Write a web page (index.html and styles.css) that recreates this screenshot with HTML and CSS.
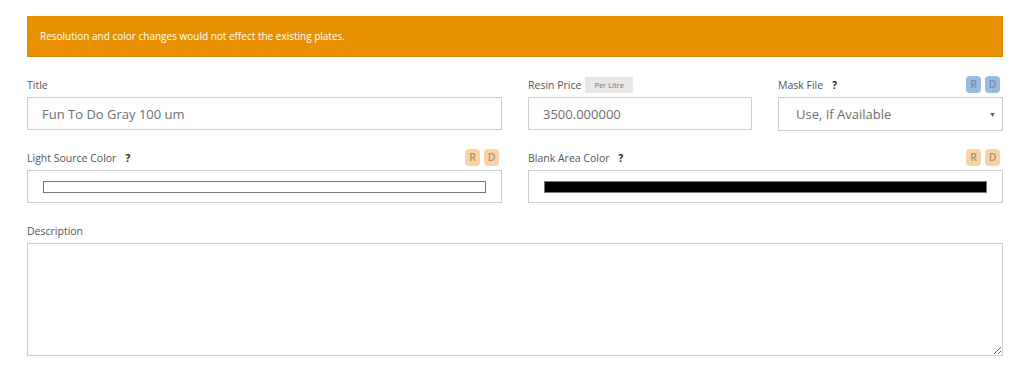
FILE: index.html
```html
<!DOCTYPE html>
<html lang="en">
    <head>
        <title>Plate settings</title>
        <link rel="stylesheet" href="styles.css">
    </head>
    <body>
        <div class="container">
            <div class="notice">Resolution and color changes would not effect the existing plates.</div>
            <div class="row row-three">
                <div class="field">
                    <div class="label-line"><label>Title</label></div>
                    <input type="text" class="box" value="Fun To Do Gray 100 um">
                </div>
                <div class="field">
                    <div class="label-line"><label>Resin Price</label><span class="unit">Per Litre</span></div>
                    <input type="text" class="box" value="3500.000000">
                </div>
                <div class="field">
                    <div class="label-line">
                        <label>Mask File</label><span class="help">?</span>
                        <span class="tags"><span class="tag blue">R</span><span class="tag blue">D</span></span>
                    </div>
                    <div class="box select">Use, If Available<span class="caret">&#9660;</span></div>
                </div>
            </div>
            <div class="row row-two">
                <div class="field">
                    <div class="label-line">
                        <label>Light Source Color</label><span class="help">?</span>
                        <span class="tags"><span class="tag orange">R</span><span class="tag orange">D</span></span>
                    </div>
                    <div class="box color-box"><div class="swatch white"></div></div>
                </div>
                <div class="field">
                    <div class="label-line">
                        <label>Blank Area Color</label><span class="help">?</span>
                        <span class="tags"><span class="tag orange">R</span><span class="tag orange">D</span></span>
                    </div>
                    <div class="box color-box"><div class="swatch black"></div></div>
                </div>
            </div>
            <div class="row">
                <div class="field">
                    <div class="label-line"><label>Description</label></div>
                    <textarea class="box desc"></textarea>
                </div>
            </div>
        </div>
    </body>
</html>
```

FILE: styles.css
```css
body {
    margin: 0;
    background: #fff;
    font-family: "Open Sans", "Noto Sans", sans-serif;
    color: #555;
}
.container {
    width: 976px;
    padding: 16px 0 0 27px;
}
.notice {
    background-color: #e88f00;
    border-bottom: 1px solid #d98400;
    color: #fff;
    font-size: 10px;
    height: 40px;
    line-height: 40px;
    padding-left: 13px;
    margin-bottom: 19px;
}
.row {
    display: grid;
    gap: 26px;
    margin-bottom: 20px;
}
.row-three {
    grid-template-columns: 475px 224px 225px;
    margin-bottom: 18px;
}
.row-two {
    grid-template-columns: 475px 475px;
    margin-bottom: 19px;
}
.label-line {
    display: flex;
    align-items: center;
    height: 17px;
    margin-bottom: 4px;
    font-size: 10.5px;
    color: #555;
}
.unit {
    background: #e8e8e8;
    color: #777;
    font-size: 7.5px;
    padding: 0 9px;
    height: 16px;
    line-height: 16px;
    margin-left: 4px;
}
.help {
    font-weight: 700;
    color: #1a2330;
    font-size: 10px;
    margin-left: 9px;
}
.tags {
    margin-left: auto;
    display: flex;
    gap: 4px;
    margin-right: 3px;
}
.tag {
    width: 15px;
    height: 17px;
    border-radius: 4px;
    font-size: 10.5px;
    font-weight: 600;
    text-align: center;
    line-height: 17px;
}
.tag.blue {
    background: #97bcdd;
    color: #7390ad;
}
.tag.orange {
    background: #f9d4a2;
    color: #ab9173;
}
.box {
    display: block;
    box-sizing: border-box;
    width: 100%;
    height: 33px;
    border: 1px solid #ccc;
    background: #fff;
    font-family: "Open Sans", "Noto Sans", sans-serif;
    font-size: 13px;
    color: #6e6e6e;
    padding: 0 14px;
    margin: 0;
    outline: none;
}
.select {
    position: relative;
    line-height: 33px;
    height: 34px;
    padding-left: 17px;
    margin-top: 1px;
}
.caret {
    position: absolute;
    right: 6px;
    top: 0;
    font-size: 7px;
    color: #555;
}
.color-box {
    display: flex;
    align-items: center;
    padding: 0 15px;
}
.swatch {
    flex: 1;
    height: 12px;
    box-sizing: border-box;
    border: 1px solid #777;
}
.swatch.white {
    background: #fff;
}
.swatch.black {
    background: #000;
}
.desc {
    height: 113px;
    resize: vertical;
}
```
